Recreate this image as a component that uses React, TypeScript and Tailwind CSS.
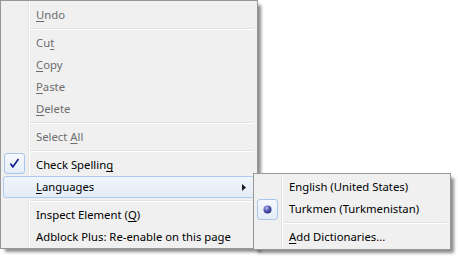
import React from "react";

type Item =
  | { kind: "sep" }
  | {
      kind: "item";
      label: React.ReactNode;
      disabled?: boolean;
      check?: boolean;
      radio?: boolean;
      hot?: boolean;
      sub?: boolean;
    };

const U = ({ children }: { children: React.ReactNode }) => (
  <span className="underline underline-offset-[2px] decoration-1">{children}</span>
);

const mainItems: Item[] = [
  { kind: "item", label: <><U>U</U>ndo</>, disabled: true },
  { kind: "sep" },
  { kind: "item", label: <>Cu<U>t</U></>, disabled: true },
  { kind: "item", label: <><U>C</U>opy</>, disabled: true },
  { kind: "item", label: <><U>P</U>aste</>, disabled: true },
  { kind: "item", label: <><U>D</U>elete</>, disabled: true },
  { kind: "sep" },
  { kind: "item", label: <>Select <U>A</U>ll</>, disabled: true },
  { kind: "sep" },
  { kind: "item", label: <>Check Spellin<U>g</U></>, check: true },
  { kind: "item", label: <><U>L</U>anguages</>, hot: true, sub: true },
  { kind: "sep" },
  { kind: "item", label: <>Inspect Element (<U>Q</U>)</> },
  { kind: "item", label: <>Adblock Plus: Re-enable on this page</> },
];

const subItems: Item[] = [
  { kind: "item", label: <>English (United States)</> },
  { kind: "item", label: <>Turkmen (Turkmenistan)</>, radio: true },
  { kind: "sep" },
  { kind: "item", label: <><U>A</U>dd Dictionaries...</> },
];

function Row({ item }: { item: Item }) {
  if (item.kind === "sep") {
    return (
      <div className="h-[6px] flex flex-col justify-center ml-[27px] mr-[1px]">
        <div className="h-px bg-[#e2e3e3]" />
        <div className="h-px bg-white" />
      </div>
    );
  }
  return (
    <div
      className={
        "relative h-[22px] flex items-center pl-[32px] pr-[8px] rounded-[3px] border " +
        (item.hot
          ? "border-[#aecbef] bg-[linear-gradient(to_bottom,#f1f5fb,#e4ecf7)]"
          : "border-transparent") +
        (item.disabled ? " text-[#6d6d6d]" : " text-black")
      }
    >
      {(item.check || item.radio) && (
        <div
          className={
            "absolute left-0 w-[21px] h-[21px] rounded-[3px] border border-[#a9c6ea] bg-[linear-gradient(to_bottom,#f6f9fd,#e3edf9)] flex items-center justify-center " +
            (item.check ? "top-[-2px]" : "top-0 h-[20px]")
          }
        >
          {item.check && (
            <svg width="11" height="11" viewBox="0 0 11 11">
              <path
                d="M1.5 5.5 L3.8 9 L9.5 1"
                fill="none"
                stroke="#101a8c"
                strokeWidth="1.6"
                strokeLinejoin="round"
              />
            </svg>
          )}
          {item.radio && (
            <svg width="9" height="9" viewBox="0 0 9 9">
              <defs>
                <radialGradient id="rd" cx="0.38" cy="0.32" r="0.7">
                  <stop offset="0" stopColor="#b9bdf0" />
                  <stop offset="0.5" stopColor="#5a60b8" />
                  <stop offset="1" stopColor="#262a7a" />
                </radialGradient>
              </defs>
              <circle cx="4.5" cy="4.5" r="4" fill="url(#rd)" />
            </svg>
          )}
        </div>
      )}
      <span className="whitespace-nowrap leading-none">{item.label}</span>
      {item.sub && (
        <svg className="ml-auto" width="4" height="7" viewBox="0 0 4 7">
          <path d="M0 0 L4 3.5 L0 7 Z" fill="#1a1a1a" />
        </svg>
      )}
    </div>
  );
}

const menuBg =
  "bg-[linear-gradient(to_right,#f0f0f0_27px,#e2e3e3_27px,#e2e3e3_28px,#ffffff_28px,#ffffff_29px,#f0f0f0_29px)]";

export default function App() {
  return (
    <div className="relative w-[458px] h-[258px] bg-white overflow-hidden font-['Segoe_UI','Noto_Sans',sans-serif] text-[11.3px]">
      <div
        className={
          "w-[258px] border border-[#979797] pt-[3px] pb-0 px-[2px] shadow-[4px_4px_3px_-1px_rgba(0,0,0,0.45)] " +
          menuBg
        }
      >
        {mainItems.map((it, i) => (
          <Row key={i} item={it} />
        ))}
      </div>
      <div
        className={
          "absolute left-[253px] top-[173px] w-[198px] border border-[#979797] pt-[2px] pb-[1px] px-[2px] shadow-[4px_4px_3px_-1px_rgba(0,0,0,0.45)] " +
          menuBg
        }
      >
        {subItems.map((it, i) => (
          <Row key={i} item={it} />
        ))}
      </div>
    </div>
  );
}
